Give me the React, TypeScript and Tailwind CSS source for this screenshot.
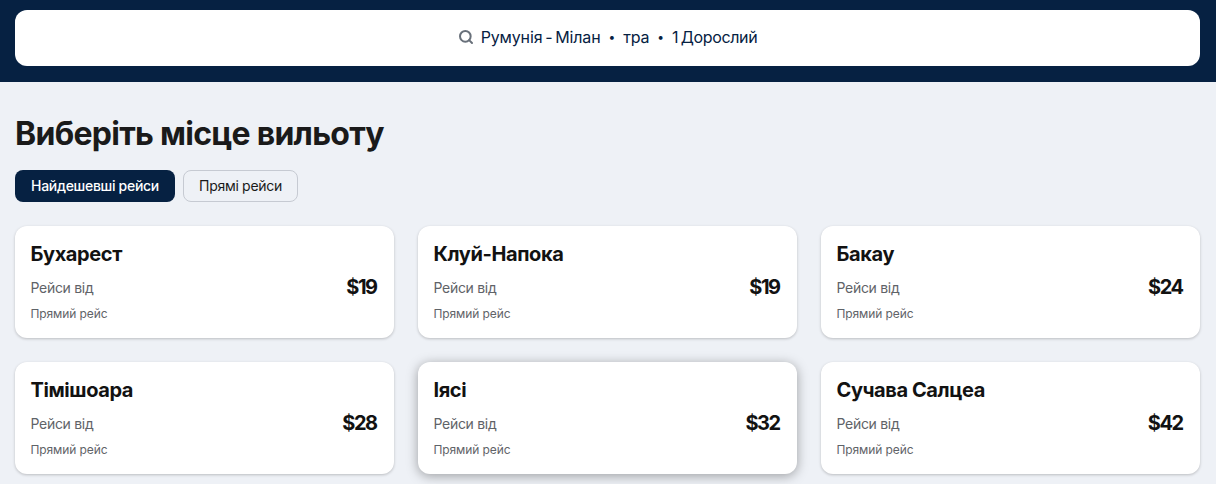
import { Search } from 'lucide-react';

const CITIES = [
  { name: 'Бухарест', price: '$19' },
  { name: 'Клуй-Напока', price: '$19' },
  { name: 'Бакау', price: '$24' },
  { name: 'Тімішоара', price: '$28' },
  { name: 'Іясі', price: '$32', raised: true },
  { name: 'Сучава Салцеа', price: '$42' },
];

function CityCard({ name, price, raised }: { name: string; price: string; raised?: boolean }) {
  return (
    <div
      className={`h-[112px] bg-white rounded-xl pl-[15.5px] pr-4 pt-[14px] ${
        raised ? 'shadow-[0_2px_12px_rgba(0,0,0,0.35)]' : 'shadow-[0_1px_3px_rgba(0,0,0,0.22)]'
      }`}
    >
      <h3 className="text-[20px] leading-[28px] font-bold text-[#121212] tracking-[-0.4px]">{name}</h3>
      <div className="flex items-start justify-between mt-[6px] pr-[1.5px]">
        <span className="text-sm leading-[28px] text-[#5f6368] tracking-[-0.3px]">Рейси від</span>
        <span className="text-[20px] leading-[28px] font-bold text-[#121212] tracking-[-1.5px] -mt-[1.5px]">{price}</span>
      </div>
      <p className="text-xs leading-[16px] text-[#5f6368] mt-[4px] tracking-[-0.1px]">Прямий рейс</p>
    </div>
  );
}

export default function App() {
  return (
    <div className="h-[484px] overflow-hidden bg-[#eef1f6] font-['Inter',sans-serif]">
      <div className="bg-[#062142] pl-[15px] pr-4 pt-[10px] pb-4">
        <div className="h-[56px] pb-[2px] bg-white rounded-xl flex items-center justify-center text-base text-[#062142] tracking-[-0.15px] [word-spacing:-1.5px]">
          <Search size={16} strokeWidth={3} className="text-[#68707a] mr-[7px]" />
          <span>Румунія - Мілан</span>
          <span className="mx-[8px] text-xs">•</span>
          <span>тра</span>
          <span className="mx-[8px] text-xs">•</span>
          <span className="tracking-[-0.35px]">1 Дорослий</span>
        </div>
      </div>
      <div className="pl-[15px] pr-4">
        <h1 className="text-[32px] leading-[40px] font-bold text-[#1a1a1a] mt-[32px] tracking-[-0.73px]">
          Виберіть місце вильоту
        </h1>
        <div className="flex gap-2 mt-[16px]">
          <button className="h-[32px] w-[160px] bg-[#062142] text-white text-sm font-medium rounded-lg tracking-[-0.3px]">
            Найдешевші рейси
          </button>
          <button className="h-[32px] w-[115px] border border-[#c6cad2] text-[#1a1a1a] text-sm rounded-lg tracking-[-0.3px]">
            Прямі рейси
          </button>
        </div>
        <div className="grid grid-cols-3 gap-6 mt-[24px]">
          {CITIES.map((c) => (
            <CityCard key={c.name} name={c.name} price={c.price} raised={c.raised} />
          ))}
        </div>
      </div>
    </div>
  );
}
